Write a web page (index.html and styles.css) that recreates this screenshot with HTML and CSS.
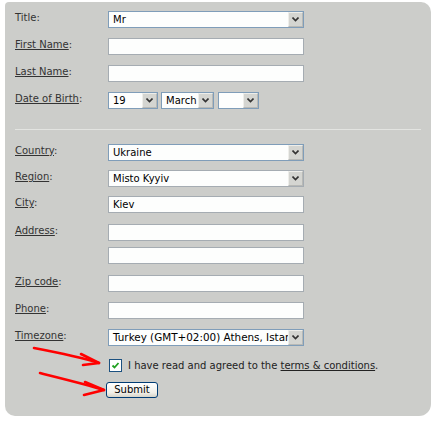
FILE: index.html
```html
<!DOCTYPE html>
<html lang="en">
<head>
  <meta charset="UTF-8">
  <title>Registration</title>
  <link rel="stylesheet" href="styles.css">
</head>
<body>

  <div class="panel">
    <div class="row">
      <label class="lbl plain">Title:</label>
      <div class="field select w-full"><span class="val">Mr</span><span class="arr"><svg width="7" height="5" viewBox="0 0 7 5"><path d="M0.5 0.5 L3.5 3.5 L6.5 0.5" fill="none" stroke="#333" stroke-width="1.6"/></svg></span></div>
    </div>
    <div class="row">
      <label class="lbl"><u>First Name</u>:</label>
      <div class="field w-full"></div>
    </div>
    <div class="row">
      <label class="lbl"><u>Last Name</u>:</label>
      <div class="field w-full"></div>
    </div>
    <div class="row">
      <label class="lbl"><u>Date of Birth</u>:</label>
      <div class="dob">
        <div class="field select w-day"><span class="val">19</span><span class="arr"><svg width="7" height="5" viewBox="0 0 7 5"><path d="M0.5 0.5 L3.5 3.5 L6.5 0.5" fill="none" stroke="#333" stroke-width="1.6"/></svg></span></div>
        <div class="field select w-month"><span class="val">March</span><span class="arr"><svg width="7" height="5" viewBox="0 0 7 5"><path d="M0.5 0.5 L3.5 3.5 L6.5 0.5" fill="none" stroke="#333" stroke-width="1.6"/></svg></span></div>
        <div class="field select w-year"><span class="val"></span><span class="arr"><svg width="7" height="5" viewBox="0 0 7 5"><path d="M0.5 0.5 L3.5 3.5 L6.5 0.5" fill="none" stroke="#333" stroke-width="1.6"/></svg></span></div>
      </div>
    </div>

    <div class="sep"></div>

    <div class="row g9">
      <label class="lbl"><u>Country</u>:</label>
      <div class="field select w-full"><span class="val">Ukraine</span><span class="arr"><svg width="7" height="5" viewBox="0 0 7 5"><path d="M0.5 0.5 L3.5 3.5 L6.5 0.5" fill="none" stroke="#333" stroke-width="1.6"/></svg></span></div>
    </div>
    <div class="row g9">
      <label class="lbl"><u>Region</u>:</label>
      <div class="field select grey w-full"><span class="val">Misto Kyyiv</span><span class="arr"><svg width="7" height="5" viewBox="0 0 7 5"><path d="M0.5 0.5 L3.5 3.5 L6.5 0.5" fill="none" stroke="#333" stroke-width="1.6"/></svg></span></div>
    </div>
    <div class="row g11">
      <label class="lbl"><u>City</u>:</label>
      <div class="field w-full"><span class="val">Kiev</span></div>
    </div>
    <div class="row g11">
      <label class="lbl"><u>Address</u>:</label>
      <div class="stack">
        <div class="field w-full"></div>
        <div class="field w-full"></div>
      </div>
    </div>
    <div class="row">
      <label class="lbl"><u>Zip code</u>:</label>
      <div class="field w-full"></div>
    </div>
    <div class="row">
      <label class="lbl"><u>Phone</u>:</label>
      <div class="field w-full"></div>
    </div>
    <div class="row g13">
      <label class="lbl"><u>Timezone</u>:</label>
      <div class="field select w-full"><span class="val tz">Turkey (GMT+02:00) Athens, Istanbul, Minsk</span><span class="arr"><svg width="7" height="5" viewBox="0 0 7 5"><path d="M0.5 0.5 L3.5 3.5 L6.5 0.5" fill="none" stroke="#333" stroke-width="1.6"/></svg></span></div>
    </div>

    <div class="agree">
      <span class="check"><svg width="9" height="9" viewBox="0 0 9 9"><path d="M1.5 4.5 L3.5 6.5 L7.5 2" fill="none" stroke="#21a121" stroke-width="1.8"/></svg></span>
      <span>I have read and agreed to the <u>terms &amp; conditions</u>.</span>
    </div>
    <div class="actions">
      <button class="submit">Submit</button>
    </div>

    <svg class="arrows" width="120" height="60" viewBox="0 0 120 60">
      <g fill="none" stroke="#f00" stroke-width="2.6" stroke-linecap="round" stroke-linejoin="round">
        <path d="M29 4 C 50 8, 75 13, 94 19"/>
        <path d="M76 10 L94 19 L78 21"/>
        <path d="M35 29 C 55 34, 80 40, 99 46"/>
        <path d="M80 38 L99 46 L79 51"/>
      </g>
    </svg>
  </div>

</body>
</html>
```

FILE: styles.css
```css
body {
  margin: 0;
  background: #fff;
  font-family: 'DejaVu Sans', Verdana, sans-serif;
  font-size: 10px;
  color: #222;
}

.panel {
  position: relative;
  box-sizing: border-box;
  width: 426px;
  height: 414px;
  margin: 2px 0 0 5px;
  padding: 9px 10px 0;
  background: #cccdca;
  border-radius: 4px 10px 12px 10px;
}

.row {
  display: flex;
  align-items: flex-start;
  margin-bottom: 10px;
}

.row.g9 { margin-bottom: 9px; }
.row.g11 { margin-bottom: 11px; }
.row.g13 { margin-bottom: 13px; }

.lbl {
  flex: none;
  width: 93px;
  line-height: 12px;
  padding-top: 1px;
  color: #333;
}

.lbl u {
  text-underline-offset: 1px;
}

.field {
  box-sizing: border-box;
  height: 17px;
  border: 1px solid #a5acb2;
  background: #fdfefd;
  line-height: 15px;
  color: #000;
}

.field .val {
  padding-left: 4px;
  white-space: nowrap;
  overflow: hidden;
}

.field .tz {
  font-size: 10.4px;
}

.select {
  display: flex;
  border-color: #7f9db9;
}

.select.grey {
  border-color: #a5acb2;
}

.select .val {
  flex: 1;
  min-width: 0;
}

.arr {
  flex: none;
  box-sizing: border-box;
  width: 15px;
  height: 15px;
  border: 1px solid #eeeeea;
  border-right-color: #b8b9b6;
  border-bottom-color: #b8b9b6;
  background: #d4d5d1;
  display: flex;
  align-items: center;
  justify-content: center;
}

.w-full { width: 196px; }
.w-day { width: 50px; }
.w-month { width: 53px; margin-left: 3px; }
.w-year { width: 41px; margin-left: 4px; }

.dob {
  display: flex;
}

.stack {
  display: flex;
  flex-direction: column;
  gap: 6px;
}

.sep {
  height: 1px;
  margin: 20px 0 14px;
  background: #e3e4e1;
}

.agree {
  display: flex;
  align-items: center;
  gap: 6px;
  margin-left: 94px;
  color: #222;
}

.check {
  box-sizing: border-box;
  width: 13px;
  height: 13px;
  border: 1px solid #1c5180;
  background: #fff;
  display: flex;
  align-items: center;
  justify-content: center;
}

.actions {
  margin: 10px 0 0 91px;
}

.submit {
  box-sizing: border-box;
  width: 52px;
  height: 16px;
  padding: 0;
  border: 1px solid #003c74;
  border-radius: 3px;
  background: linear-gradient(#fff, #f0efe8 70%, #d6d3c8);
  font-family: 'DejaVu Sans', Verdana, sans-serif;
  font-size: 10px;
  line-height: 14px;
  color: #000;
}

.arrows {
  position: absolute;
  left: 0;
  top: 342px;
}
```
